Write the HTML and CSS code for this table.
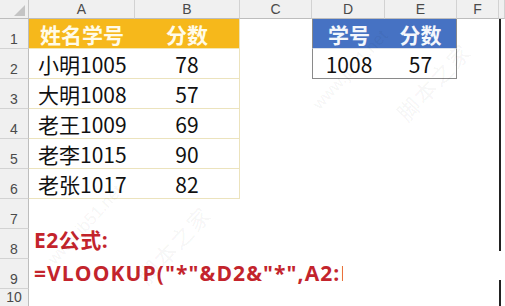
FILE: index.html
```html
<!DOCTYPE html>
<html lang="zh">
<head>
<meta charset="utf-8">
<title>VLOOKUP</title>
<link rel="stylesheet" href="styles.css">
</head>
<body>
<div class="sheet">
  <div class="corner"><span class="tri"></span></div>
  <div class="colh ca">A</div>
  <div class="colh cb">B</div>
  <div class="colh cc">C</div>
  <div class="colh cd">D</div>
  <div class="colh ce">E</div>
  <div class="colh cf">F</div>
  <div class="colh cg"></div>

  <div class="rowh r1">1</div>
  <div class="rowh r2">2</div>
  <div class="rowh r3">3</div>
  <div class="rowh r4">4</div>
  <div class="rowh r5">5</div>
  <div class="rowh r6">6</div>
  <div class="rowh r7">7</div>
  <div class="rowh r8">8</div>
  <div class="rowh r9">9</div>
  <div class="rowh r10">10</div>

  <div class="cell gold left ca r1">姓名学号</div>
  <div class="cell gold mid cb r1">分数</div>
  <div class="cell yel left ca r2">小明1005</div>
  <div class="cell yel mid cb r2">78</div>
  <div class="cell yel left ca r3">大明1008</div>
  <div class="cell yel mid cb r3">57</div>
  <div class="cell yel left ca r4">老王1009</div>
  <div class="cell yel mid cb r4">69</div>
  <div class="cell yel left ca r5">老李1015</div>
  <div class="cell yel mid cb r5">90</div>
  <div class="cell yel left ca r6">老张1017</div>
  <div class="cell yel mid cb r6">82</div>

  <div class="cell blue mid cd r1 bl">学号</div>
  <div class="cell blue mid ce r1 br">分数</div>
  <div class="cell grey mid cd r2 bl">1008</div>
  <div class="cell grey mid ce r2 br">57</div>

  <div class="gline"></div>

  <div class="formula">
    <div class="fline f1">E2公式:</div>
    <div class="fline f2"><span class="clip">=VLOOKUP("*"&amp;D2&amp;"*",A2:B</span></div>
  </div>

  <span class="wm wm1">www.jb51.net</span>
  <span class="wm wm2">脚本之家</span>
  <span class="wm wm3">www.jb51.net</span>
  <span class="wm wm4">脚本之家</span>
  <span class="gap"></span>
</div>
</body>
</html>
```

FILE: styles.css
```css
* { box-sizing: border-box; }
html, body { margin: 0; padding: 0; background: #fff; }

.sheet {
  position: relative;
  width: 505px;
  height: 306px;
  overflow: hidden;
  display: grid;
  grid-template-columns: 29px 106px 105px 72px 73px 72px 42px 1fr;
  grid-template-rows: 19px repeat(9, 30px) 1fr;
  background: #fff;
  font-family: "Noto Sans CJK SC", "Noto Sans", sans-serif;
}

.corner {
  grid-column: 1; grid-row: 1;
  background: #f0f0f0;
  border-right: 1px solid #c6c6c6;
  border-bottom: 1px solid #bdbdbd;
  display: flex; align-items: flex-end; justify-content: flex-end;
  padding: 0 3px 2px 0;
}
.tri {
  width: 0; height: 0;
  border-left: 11px solid transparent;
  border-bottom: 11px solid #c4c4c4;
}

.colh {
  grid-row: 1;
  background: #f0f0f0;
  border-right: 1px solid #d2d2d2;
  border-bottom: 1px solid #bdbdbd;
  font: 14px/19px "Liberation Sans", "DejaVu Sans", sans-serif;
  color: #4a4a4a;
  text-align: center;
}

.rowh {
  grid-column: 1;
  background: #f0f0f0;
  border-right: 1px solid #bdbdbd;
  border-bottom: 1px solid #d2d2d2;
  display: flex; align-items: flex-end; justify-content: center;
  padding-bottom: 1px;
  font: 14px/16px "Liberation Sans", "DejaVu Sans", sans-serif;
  color: #4a4a4a;
}
.r10 { grid-row: 11; border-bottom: none; }

.ca { grid-column: 2; }
.cb { grid-column: 3; }
.cc { grid-column: 4; }
.cd { grid-column: 5; }
.ce { grid-column: 6; }
.cf { grid-column: 7; }
.cg { grid-column: 8; }

.r1 { grid-row: 2; }
.r2 { grid-row: 3; }
.r3 { grid-row: 4; }
.r4 { grid-row: 5; }
.r5 { grid-row: 6; }
.r6 { grid-row: 7; }
.r7 { grid-row: 8; }
.r8 { grid-row: 9; }
.r9 { grid-row: 10; }

.cell {
  display: flex; align-items: center;
  font-size: 21px;
  line-height: 1;
  padding-top: 2px;
  color: #111;
  white-space: nowrap;
}
.left { padding-left: 9px; }
.mid { justify-content: center; }

.gold {
  background: #f6b81b;
  color: #fffbe9;
  font-weight: 700;
  border-bottom: 1px solid #f4e7b4;
}
.gold.left { padding-left: 11px; }
.yel {
  border-bottom: 1px solid #ece3bd;
}
.yel.cb, .gold.cb { border-right: 1px solid #ece3bd; }

.blue {
  background: #4672c3;
  color: #f4f7fc;
  font-weight: 700;
  border-bottom: 1px solid #d9dfea;
}
.grey { border-bottom: 1px solid #8a8a8a; }
.bl { border-left: 1px solid #8a8a8a; }
.br { border-right: 1px solid #8a8a8a; }

.gline {
  grid-column: 8;
  grid-row: 2 / -1;
  border-left: 2px solid #222;
}

.formula {
  grid-column: 2 / 7;
  grid-row: 9 / 11;
  padding-left: 5px;
  color: #c3242c;
  font-weight: 700;
  font-family: "Open Sans", "Noto Sans CJK SC", sans-serif;
  font-size: 21px;
}
.fline {
  height: 30px;
  white-space: nowrap;
}
.f1 { line-height: 22px; letter-spacing: 0.5px; }
.f2 { line-height: 29px; }
.clip {
  display: inline-block;
  width: 309px;
  overflow: hidden;
  vertical-align: top;
  letter-spacing: 1.1px;
}

.wm {
  position: absolute;
  color: rgba(0, 0, 0, 0.055);
  white-space: nowrap;
  transform: rotate(-47deg);
  transform-origin: center;
}
.wm1 { left: 35px; top: 215px; font: 17px "Liberation Sans", sans-serif; }
.wm2 { left: 125px; top: 228px; font-size: 22px; letter-spacing: 2px; }
.wm3 { left: 300px; top: 60px; font: 17px "Liberation Sans", sans-serif; }
.wm4 { left: 385px; top: 65px; font-size: 22px; letter-spacing: 2px; }

.gap {
  position: absolute;
  left: 495px; top: 251px;
  width: 10px; height: 29px;
  background: #fff;
}
```
